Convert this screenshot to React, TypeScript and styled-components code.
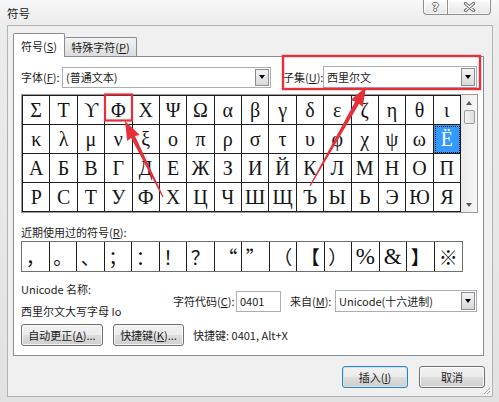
import React from 'react';
import styled, { createGlobalStyle } from 'styled-components';

const uiFont = `"Noto Sans CJK SC", "Noto Sans", sans-serif`;
const symFont = `"Liberation Serif", "DejaVu Serif", "Noto Sans CJK SC", serif`;

const GlobalStyle = createGlobalStyle`
  html, body { margin:0; padding:0; background:#fff; }
  body { font-family:${uiFont}; font-size:11px; color:#1b1b1b; }
  u { text-decoration-thickness:1px; text-underline-offset:1px; }
`;

const Window = styled.div`
    position:relative;
    width:499px;
    height:402px;
    box-sizing:border-box;
    display:flex;
    flex-direction:column;
    overflow:hidden;
    background:linear-gradient(180deg,#f7f8f9 0,#ececed 24px,#e2e2e2 100%);
`;
const TitleBar = styled.div`
    height:25px;
    display:flex;
    align-items:flex-start;
    flex-shrink:0;
`;
const Title = styled.span`
    margin:6px 0 0 7px;
    font-size:11.5px;
    line-height:14px;
    color:#1a1a1a;
`;
const Captions = styled.div`
    margin-left:auto;
    margin-right:8px;
    display:flex;
`;
const CapBtn = styled.div<{ $w:number; $last?:boolean }>`
    width:${(p) => p.$w}px;
    height:15px;
    box-sizing:border-box;
    border:1px solid #8e8f91;
    border-top:0;
    border-left:${(p) => (p.$last ? '0' : '1px solid #8e8f91')};
    border-radius:${(p) => (p.$last ? '0 0 4px 0' : '0 0 0 4px')};
    background:linear-gradient(180deg,#fbfbfb,#e6e7e8);
    box-shadow:inset 0 0 0 1px rgba(255,255,255,.7);
    display:flex;
    align-items:center;
    justify-content:center;
`;
const HelpGlyph = styled.span`
    font-family:"DejaVu Sans", sans-serif;
    font-weight:bold;
    font-size:11px;
    line-height:11px;
    color:#fff;
    text-shadow:1px 0 #6d6d6d,-1px 0 #6d6d6d,0 1px #6d6d6d,0 -1px #6d6d6d;
`;
const Client = styled.div`
    position:relative;
    flex:1;
    margin:0 6px 5px 7px;
    background:#f0f0f0;
    border:1px solid #b3b3b3;
    display:flex;
    flex-direction:column;
`;
const TabRow = styled.div`
    display:flex;
    align-items:flex-end;
    height:23px;
    margin:7px 0 0 5px;
`;
const Tab = styled.div<{ $active?:boolean; $w:number }>`
    position:relative;
    z-index:${(p) => (p.$active ? 1 : 0)};
    width:${(p) => p.$w}px;
    height:${(p) => (p.$active ? 24 : 19)}px;
    margin-bottom:${(p) => (p.$active ? -1 : 0)}px;
    box-sizing:border-box;
    border:1px solid #898c95;
    border-bottom:0;
    border-left:${(p) => (p.$active ? '1px solid #898c95' : '0')};
    border-radius:2px 2px 0 0;
    background:${(p) => (p.$active ? '#fff' : 'linear-gradient(180deg,#f3f3f3,#dcdcdc)')};
    display:flex;
    align-items:center;
    justify-content:center;
    line-height:14px;
`;
const Panel = styled.div`
    margin-left:5px;
    width:471px;
    height:300px;
    box-sizing:border-box;
    border:1px solid #898c95;
    background:#fff;
    padding:9px 0 0 7px;
    display:flex;
    flex-direction:column;
`;
const Row = styled.div<{ $mt?:number }>`
    display:flex;
    align-items:center;
    margin-top:${(p) => p.$mt || 0}px;
`;
const Label = styled.span<{ $w?:number; $ml?:number }>`
    width:${(p) => (p.$w ? `${p.$w}px` : 'auto')};
    margin-left:${(p) => p.$ml || 0}px;
    flex-shrink:0;
    line-height:14px;
    white-space:nowrap;
`;
const Combo = styled.div<{ $w:number; $h?:number }>`
    width:${(p) => p.$w}px;
    height:${(p) => p.$h || 21}px;
    box-sizing:border-box;
    border:1px solid #abadb3;
    background:#fff;
    display:flex;
    align-items:center;
    padding-left:3px;
`;
const ComboText = styled.span`
    flex:1;
    line-height:14px;
    white-space:nowrap;
`;
const DropBtn = styled.div`
    width:14px;
    align-self:stretch;
    margin:1px;
    box-sizing:border-box;
    border:1px solid #8b8d92;
    background:linear-gradient(180deg,#f4f4f4,#d9d9d9);
    display:flex;
    align-items:center;
    justify-content:center;
`;
const Tri = styled.span<{ $up?:boolean; $c?:string }>`
    width:0;
    height:0;
    border-left:3.5px solid transparent;
    border-right:3.5px solid transparent;
    ${(p) => (p.$up ? 'border-bottom' : 'border-top')}:4px solid ${(p) => p.$c || '#000'};
`;
const GridBox = styled.div`
    margin-top:6px;
    width:457px;
    height:119px;
    box-sizing:border-box;
    border:1px solid #9a9a9a;
    display:flex;
`;
const CharGrid = styled.div`
    flex:1;
    display:grid;
    grid-template-columns:repeat(16,1fr);
    grid-template-rows:repeat(4,1fr);
    border-left:1px solid #1e1e1e;
    border-top:1px solid #1e1e1e;
`;
const Cell = styled.div<{ $sel?:boolean }>`
    border-right:1px solid #1e1e1e;
    border-bottom:1px solid #1e1e1e;
    display:flex;
    align-items:center;
    justify-content:center;
    font-family:${symFont};
    font-size:20px;
    line-height:1;
    color:${(p) => (p.$sel ? '#fff' : '#151515')};
    background:${(p) => (p.$sel ? '#3399ff' : 'transparent')};
    outline:${(p) => (p.$sel ? '1px dotted #111' : 'none')};
    outline-offset:-2px;
`;
const Scrollbar = styled.div`
    width:16px;
    background:linear-gradient(90deg,#e9e9ea,#f7f7f7);
    display:flex;
    flex-direction:column;
    align-items:center;
`;
const ScrollArrow = styled.div`
    height:15px;
    width:100%;
    display:flex;
    align-items:center;
    justify-content:center;
`;
const Thumb = styled.div`
    width:11px;
    height:14px;
    box-sizing:border-box;
    border:1px solid #9b9b9b;
    border-radius:2px;
    background:linear-gradient(90deg,#f4f4f4,#dcdcdc);
`;
const Spacer = styled.div`
    flex:1;
`;
const RecentRow = styled.div`
    margin-top:2px;
    width:442px;
    height:31px;
    box-sizing:border-box;
    border:1px solid #6f6f6f;
    display:grid;
    grid-template-columns:repeat(16,1fr);
`;
const RecentCell = styled.div<{ $serif?:boolean }>`
    border-right:1px solid #1e1e1e;
    display:flex;
    align-items:center;
    justify-content:center;
    font-family:${(p) => (p.$serif ? symFont : `"Noto Sans CJK SC", serif`)};
    font-size:${(p) => (p.$serif ? 23 : 19)}px;
    line-height:1;
    color:#111;
    &:last-child { border-right:0; }
`;
const InfoRow = styled.div`
    display:flex;
    margin-top:10px;
`;
const NameCol = styled.div`
    width:152px;
    display:flex;
    flex-direction:column;
`;
const NameValue = styled.span`
    margin-top:8px;
    line-height:14px;
`;
const CodeGroup = styled.div`
    display:flex;
    align-items:center;
    margin-top:8px;
    height:22px;
`;
const TextBox = styled.div`
    width:45px;
    height:21px;
    box-sizing:border-box;
    border:1px solid #abadb3;
    background:#fff;
    padding-left:3px;
    display:flex;
    align-items:center;
`;
const PushButton = styled.div<{ $w:number; $default?:boolean; $ml?:number }>`
    width:${(p) => p.$w}px;
    height:22px;
    margin-left:${(p) => p.$ml || 0}px;
    box-sizing:border-box;
    border:1px solid ${(p) => (p.$default ? '#3c7fb1' : '#707070')};
    border-radius:3px;
    background:linear-gradient(180deg,#f2f2f2 0%,#ebebeb 48%,#dddddd 52%,#cfcfcf 100%);
    box-shadow:inset 0 0 0 1px ${(p) => (p.$default ? '#bfe6f9' : 'rgba(255,255,255,.75)')};
    display:flex;
    align-items:center;
    justify-content:center;
    line-height:14px;
    white-space:nowrap;
`;
const ShortcutText = styled.span`
    margin-left:9px;
    line-height:14px;
`;
const Footer = styled.div`
    margin-top:10px;
    padding-right:7px;
    display:flex;
    justify-content:flex-end;
    gap:11px;
`;
const Grip = styled.svg`
    position:absolute;
    right:1px;
    bottom:1px;
`;
const Overlay = styled.svg`
    position:absolute;
    left:0;
    top:0;
    pointer-events:none;
    z-index:5;
`;

const rows = [
  'Σ Τ ϒ Φ Χ Ψ Ω α β γ δ ε ζ η θ ι',
  'κ λ μ ν ξ ο π ρ σ τ υ φ χ ψ ω Ё',
  'А Б В Г Д Е Ж З И Й К Л М Н О П',
  'Р С Т У Ф Х Ц Ч Ш Щ Ъ Ы Ь Э Ю Я',
].map((r) => r.split(' '));

const recent = ['，', '。', '、', '；', '：', '！', '？', '“', '”', '（', '【', '）', '%', '&', '】', '※'];

const arrowPoints = (x1:number, y1:number, x2:number, y2:number) => {
  const dx = x2 - x1;
  const dy = y2 - y1;
  const len = Math.hypot(dx, dy);
  const ux = dx / len;
  const uy = dy / len;
  const pt = (t:number, w:number) => `${(x1 + ux * t - uy * w).toFixed(1)},${(y1 + uy * t + ux * w).toFixed(1)}`;
  const head = 18;
  return [
    pt(0, 0.6), pt(len - head, 2.2), pt(len - head - 1, 7), pt(len, 0),
    pt(len - head - 1, -7), pt(len - head, -2.2), pt(0, -0.6),
  ].join(' ');
};

const red = '#e3303a';

export default function App() {
  return (
    <>
      <GlobalStyle />
      <Window>
        <TitleBar>
          <Title>符号</Title>
          <Captions>
            <CapBtn $w={25}><HelpGlyph>?</HelpGlyph></CapBtn>
            <CapBtn $w={43} $last>
              <svg width="13" height="10" viewBox="0 0 13 10">
                <path d="M2.5 1.5 L10.5 8.5 M10.5 1.5 L2.5 8.5" stroke="#6d6d6d" strokeWidth="3.2" strokeLinecap="round" />
                <path d="M2.5 1.5 L10.5 8.5 M10.5 1.5 L2.5 8.5" stroke="#fff" strokeWidth="1.3" strokeLinecap="round" />
              </svg>
            </CapBtn>
          </Captions>
        </TitleBar>
        <Client>
          <TabRow>
            <Tab $active $w={52}>符号(<u>S</u>)</Tab>
            <Tab $w={72}>特殊字符(<u>P</u>)</Tab>
          </TabRow>
          <Panel>
            <Row>
              <Label $w={41}>字体(<u>F</u>):</Label>
              <Combo $w={209}>
                <ComboText>(普通文本)</ComboText>
                <DropBtn><Tri /></DropBtn>
              </Combo>
              <Label $w={40} $ml={12}>子集(<u>U</u>):</Label>
              <Combo $w={154} $h={22}>
                <ComboText>西里尔文</ComboText>
                <DropBtn><Tri /></DropBtn>
              </Combo>
            </Row>
            <GridBox>
              <CharGrid>
                {rows.flat().map((c, i) => (
                  <Cell key={i} $sel={c === 'Ё'}>{c}</Cell>
                ))}
              </CharGrid>
              <Scrollbar>
                <ScrollArrow><Tri $up $c="#555" /></ScrollArrow>
                <Thumb />
                <Spacer />
                <ScrollArrow><Tri $c="#555" /></ScrollArrow>
              </Scrollbar>
            </GridBox>
            <Row $mt={12}>
              <Label>近期使用过的符号(<u>R</u>):</Label>
            </Row>
            <RecentRow>
              {recent.map((c, i) => (
                <RecentCell key={i} $serif={c === '%' || c === '&'}>{c}</RecentCell>
              ))}
            </RecentRow>
            <InfoRow>
              <NameCol>
                <Label>Unicode 名称:</Label>
                <NameValue>西里尔文大写字母 Io</NameValue>
              </NameCol>
              <CodeGroup>
                <Label $w={63}>字符代码(<u>C</u>):</Label>
                <TextBox>0401</TextBox>
                <Label $w={45} $ml={9}>来自(<u>M</u>):</Label>
                <Combo $w={142} $h={22}>
                  <ComboText>Unicode(十六进制)</ComboText>
                  <DropBtn><Tri /></DropBtn>
                </Combo>
              </CodeGroup>
            </InfoRow>
            <Row $mt={6}>
              <PushButton $w={82}>自动更正(<u>A</u>)...</PushButton>
              <PushButton $w={71} $ml={10}>快捷键(<u>K</u>)...</PushButton>
              <ShortcutText>快捷键: 0401, Alt+X</ShortcutText>
            </Row>
          </Panel>
          <Footer>
            <PushButton $w={66} $default>插入(<u>I</u>)</PushButton>
            <PushButton $w={66}>取消</PushButton>
          </Footer>
          <Grip width="10" height="10" viewBox="0 0 10 10">
            <path d="M9 3 L3 9 M9 6 L6 9" stroke="#a5a5a5" strokeWidth="1" />
          </Grip>
        </Client>
        <Overlay width={499} height={402} viewBox="0 0 499 402">
          <rect x={105} y={94.5} width={27} height={26} fill="none" stroke={red} strokeWidth={2.2} />
          <rect x={283} y={56} width={197} height={33} fill="none" stroke={red} strokeWidth={2.4} />
          <polygon points={arrowPoints(163, 197, 125, 121)} fill={red} />
          <polygon points={arrowPoints(310, 186, 366, 87)} fill={red} />
        </Overlay>
      </Window>
    </>
  );
}
